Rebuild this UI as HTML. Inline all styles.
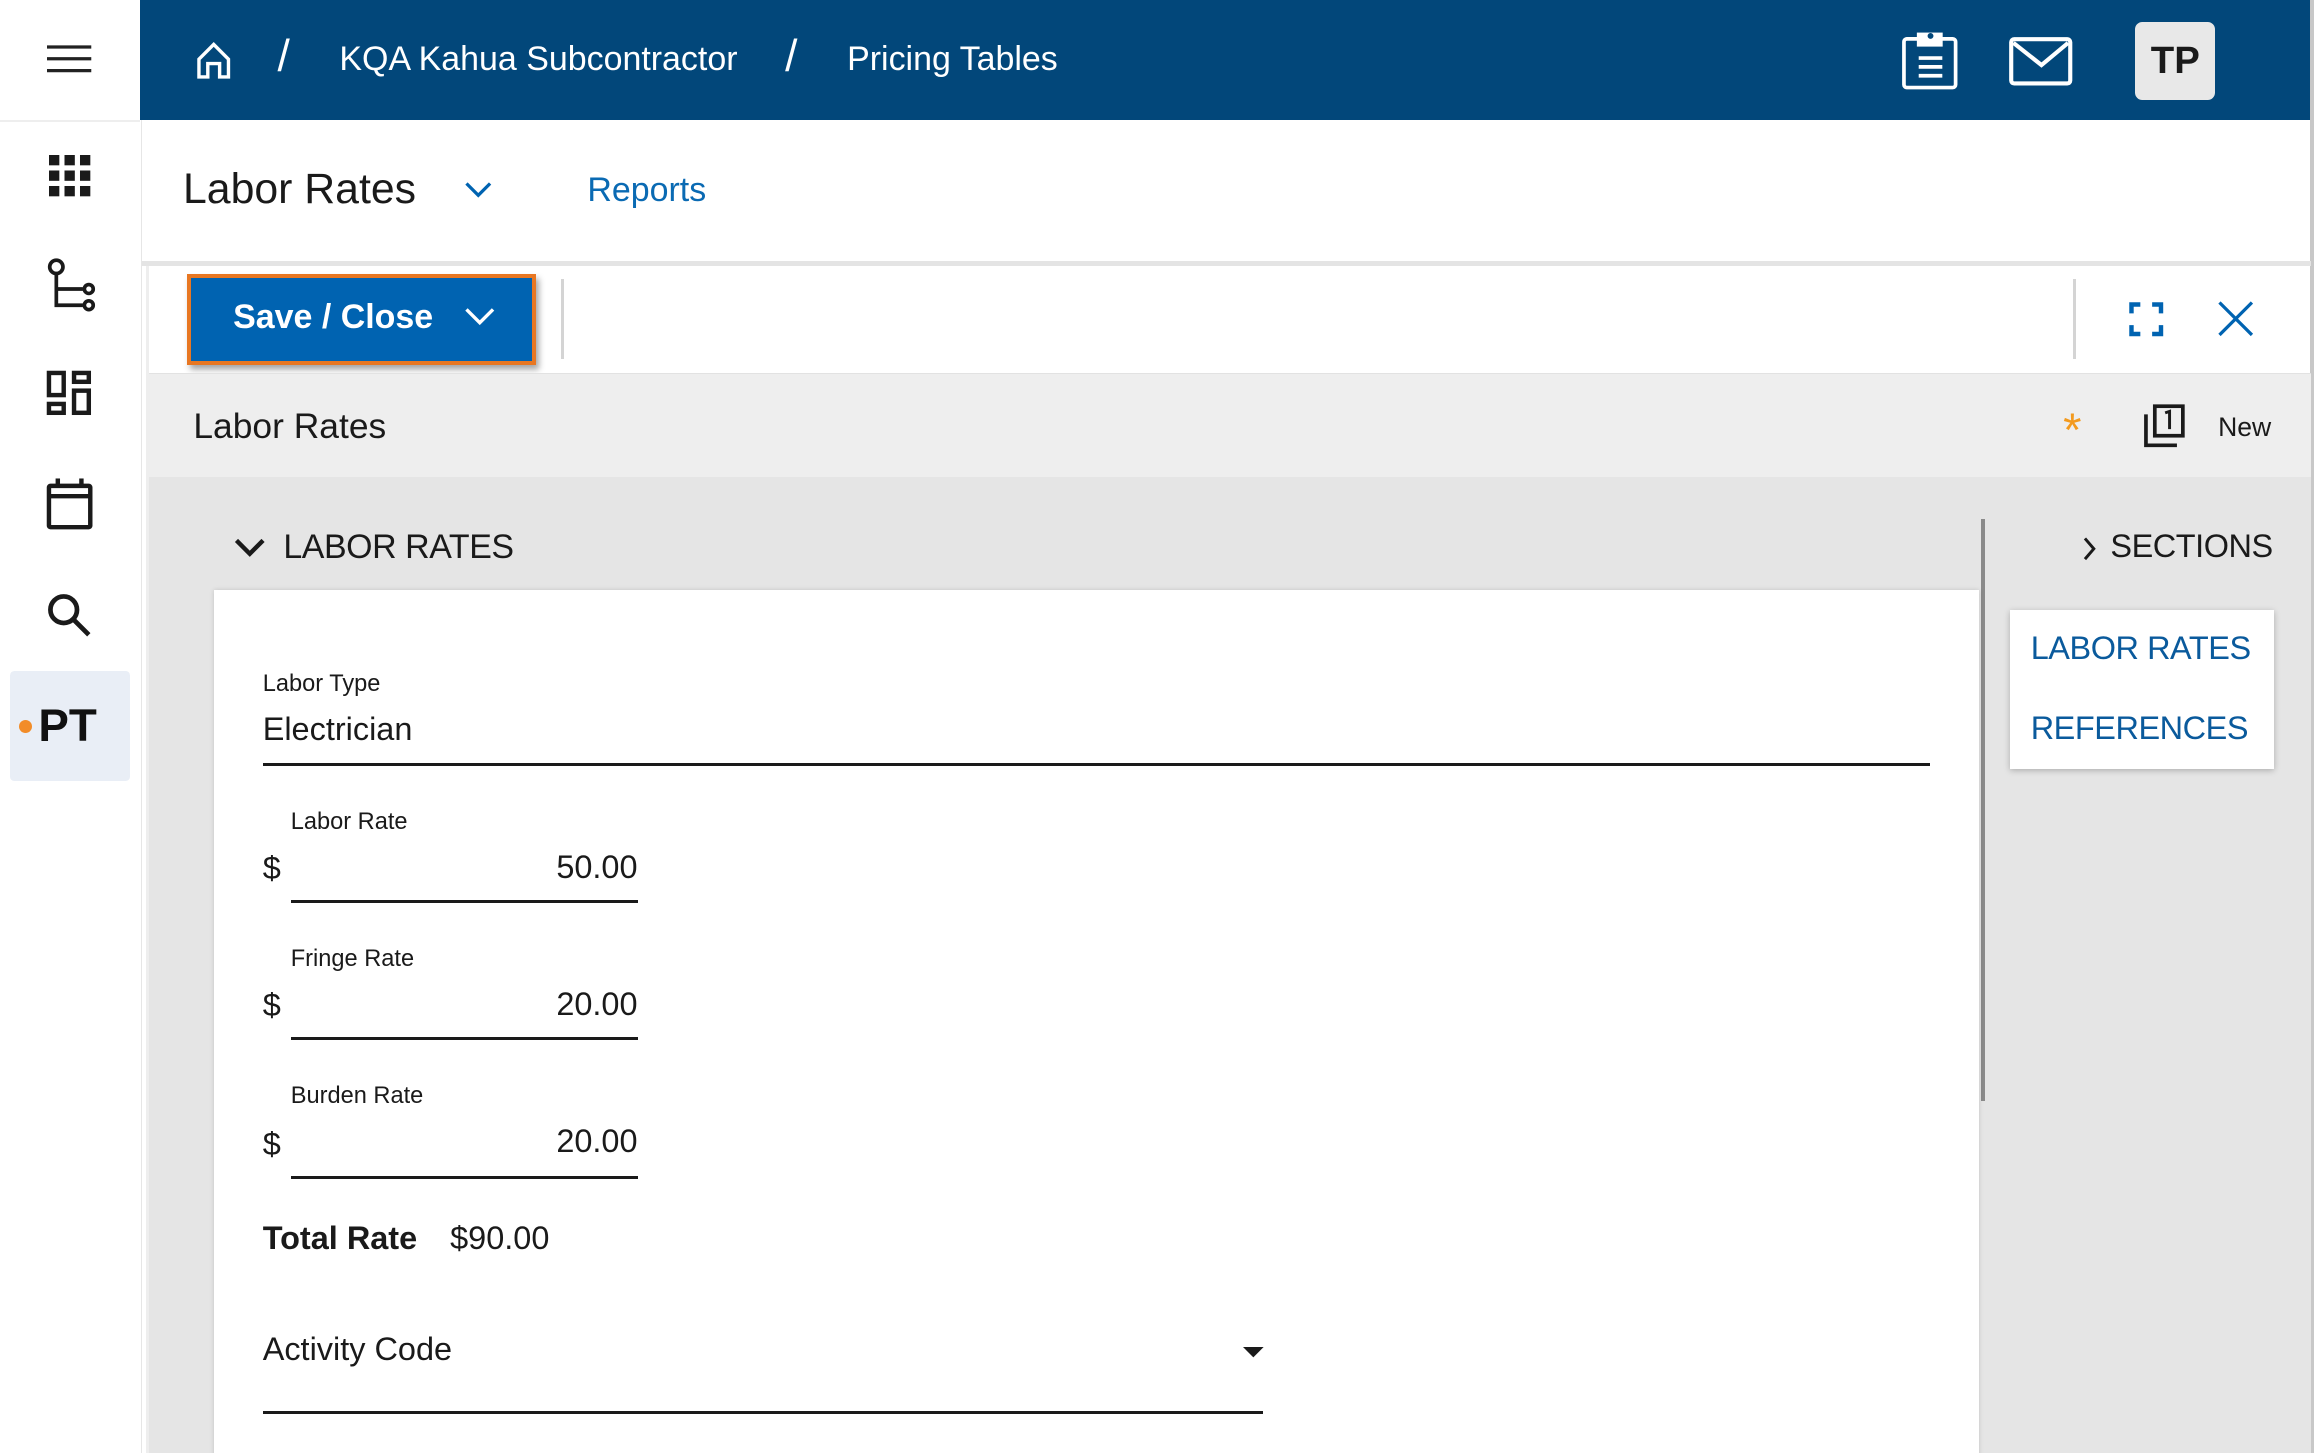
<!DOCTYPE html>
<html><head><meta charset="utf-8"><style>
*{box-sizing:border-box;margin:0;padding:0}
html,body{width:2314px;height:1453px;overflow:hidden;background:#fff}
#r{zoom:1.4758;position:relative;width:1568px;height:985px;font-family:"Liberation Sans",Arial,sans-serif;color:#1a1a1a;overflow:hidden}
.a{position:absolute}
svg{position:absolute;overflow:visible}
</style></head><body><div id="r">
<!-- sidebar -->
<div class="a" style="left:0;top:0;width:96px;height:985px;background:#fff;border-right:1px solid #e6e6e6"></div>
<div class="a" style="left:0;top:81px;width:95px;height:2px;background:#eee"></div>
<svg style="left:32px;top:30px" width="32" height="22"><g stroke="#222" stroke-width="2.2"><line x1="0" y1="2" x2="30" y2="2"/><line x1="0" y1="10" x2="30" y2="10"/><line x1="0" y1="18" x2="30" y2="18"/></g></svg>
<svg style="left:33px;top:105px" width="28" height="28"><g fill="#1a1a1a"><rect x="0" y="0" width="7" height="7"/><rect x="10.5" y="0" width="7" height="7"/><rect x="21" y="0" width="7" height="7"/><rect x="0" y="10.5" width="7" height="7"/><rect x="10.5" y="10.5" width="7" height="7"/><rect x="21" y="10.5" width="7" height="7"/><rect x="0" y="21" width="7" height="7"/><rect x="10.5" y="21" width="7" height="7"/><rect x="21" y="21" width="7" height="7"/></g></svg>
<svg style="left:31px;top:175px" width="34" height="40" fill="none" stroke="#1a1a1a" stroke-width="2.5"><circle cx="7" cy="6" r="4.5"/><path d="M7 11 V32 H25 M7 21 H25"/><circle cx="29" cy="21" r="3"/><circle cx="29" cy="32" r="3"/></svg>
<svg style="left:31px;top:251px" width="32" height="32" fill="none" stroke="#1a1a1a" stroke-width="3"><rect x="2" y="2" width="10" height="15"/><rect x="19" y="2" width="10" height="6"/><rect x="2" y="23" width="10" height="6"/><rect x="19" y="14" width="10" height="15"/></svg>
<svg style="left:31px;top:323px" width="32" height="36" fill="none" stroke="#1a1a1a" stroke-width="3"><rect x="2" y="6" width="28" height="28" rx="1"/><line x1="2" y1="13" x2="30" y2="13"/><line x1="8" y1="1" x2="8" y2="7"/><line x1="24" y1="1" x2="24" y2="7"/></svg>
<svg style="left:31px;top:401px" width="32" height="32" fill="none" stroke="#1a1a1a" stroke-width="3.2"><circle cx="12" cy="12" r="9"/><line x1="19" y1="19" x2="29" y2="29"/></svg>
<div class="a" style="left:7px;top:455px;width:81px;height:74px;background:#e9eef6;border-radius:3px"></div>
<div class="a" style="left:13px;top:488px;width:9px;height:9px;border-radius:50%;background:#f28c28"></div>
<div class="a" style="left:26px;top:474px;font-size:31px;font-weight:bold;color:#111">PT</div>
<!-- top bar -->
<div class="a" style="left:95px;top:0;width:1473px;height:81px;background:#02477a"></div>
<svg style="left:133px;top:27px" width="26" height="28" fill="none" stroke="#fff" stroke-width="2.3"><path d="M2 13 L12 3 L22 13 V25 H16 V16 H8 V25 H2 Z"/></svg>
<div class="a" style="left:188px;top:22px;font-size:30px;color:#fff">/</div>
<div class="a" style="left:230px;top:27px;font-size:23px;color:#fff">KQA Kahua Subcontractor</div>
<div class="a" style="left:532px;top:22px;font-size:30px;color:#fff">/</div>
<div class="a" style="left:574px;top:27px;font-size:23px;color:#fff">Pricing Tables</div>
<svg style="left:1288px;top:20px" width="40" height="42" fill="none" stroke="#fff" stroke-width="2.5"><rect x="2" y="6" width="35" height="33" rx="2"/><rect x="12" y="3" width="15" height="7" fill="#fff"/><circle cx="20" cy="4" r="2" fill="#02477a" stroke="none"/><line x1="12" y1="19" x2="28" y2="19"/><line x1="12" y1="25" x2="28" y2="25"/><line x1="12" y1="31" x2="28" y2="31"/></svg>
<svg style="left:1361px;top:25px" width="44" height="35" fill="none" stroke="#fff" stroke-width="2.8"><rect x="1.5" y="1.5" width="40" height="30" rx="2"/><path d="M3 4 L22 19 L40 4"/></svg>
<div class="a" style="left:1447px;top:15px;width:54px;height:53px;background:#e8e8e8;border-radius:5px;font-size:26px;font-weight:bold;text-align:center;line-height:53px;color:#1a1a1a">TP</div>
<div class="a" style="left:1565px;top:0;width:3px;height:985px;background:#c8c8c8"></div>
<!-- header row -->
<div class="a" style="left:124px;top:112px;font-size:29px;color:#1a1a1a">Labor Rates</div>
<svg style="left:315px;top:123px" width="18" height="12" fill="none" stroke="#0063b1" stroke-width="2.2"><path d="M1 1 L9 9 L17 1"/></svg>
<div class="a" style="left:398px;top:116px;font-size:23px;color:#0a6ab3">Reports</div>
<div class="a" style="left:96px;top:177px;width:1470px;height:3px;background:#e4e4e4"></div>
<div class="a" style="left:99px;top:180px;width:2px;height:805px;background:#eee"></div>
<!-- toolbar -->
<div class="a" style="left:127px;top:186px;width:236px;height:61px;border:3px solid #e87722;background:#0063b1;box-shadow:2px 3px 4px rgba(0,0,0,.35)"></div>
<div class="a" style="left:158px;top:202px;font-size:23px;font-weight:bold;color:#fff">Save / Close</div>
<svg style="left:315px;top:209px" width="20" height="13" fill="none" stroke="#fff" stroke-width="2.3"><path d="M1 1 L10 10 L19 1"/></svg>
<div class="a" style="left:380px;top:189px;width:2px;height:54px;background:#d4d4d4"></div>
<div class="a" style="left:1405px;top:189px;width:2px;height:54px;background:#d4d4d4"></div>
<svg style="left:1443px;top:205px" width="22" height="22" fill="none" stroke="#0063b1" stroke-width="3"><path d="M1 7 V1 H7 M15 1 H21 V7 M21 15 V21 H15 M7 21 H1 V15"/></svg>
<svg style="left:1503px;top:204px" width="24" height="24" fill="none" stroke="#0063b1" stroke-width="2.2"><path d="M1 1 L23 23 M23 1 L1 23"/></svg>
<!-- title bar -->
<div class="a" style="left:101px;top:253px;width:1465px;height:70px;background:#eeeeee;border-top:1px solid #e2e2e2"></div>
<div class="a" style="left:131px;top:275px;font-size:24px;color:#1a1a1a">Labor Rates</div>
<div class="a" style="left:1398px;top:276px;font-size:32px;color:#f39a1e;line-height:32px">*</div>
<svg style="left:1452px;top:274px" width="30" height="30" fill="none" stroke="#1a1a1a" stroke-width="2.5"><path d="M2 7 V28 H23"/><rect x="8" y="1.5" width="19" height="20"/><path d="M15 6 L18 5 V17" stroke-width="2"/></svg>
<div class="a" style="left:1503px;top:279px;font-size:18px;color:#1a1a1a">New</div>
<!-- content -->
<div class="a" style="left:101px;top:323px;width:1465px;height:662px;background:#e5e5e5"></div>
<svg style="left:159px;top:365px" width="20" height="14" fill="none" stroke="#1a1a1a" stroke-width="3"><path d="M1 1 L10 10 L19 1"/></svg>
<div class="a" style="left:192px;top:358px;font-size:23px;color:#1a1a1a;letter-spacing:-0.3px">LABOR RATES</div>
<div class="a" style="left:1342px;top:352px;width:3px;height:394px;background:#8a8a8a"></div>
<svg style="left:1411px;top:364px" width="10" height="16" fill="none" stroke="#1a1a1a" stroke-width="2"><path d="M2 1 L8 8 L2 15"/></svg>
<div class="a" style="left:1430px;top:358px;font-size:22px;color:#1a1a1a;letter-spacing:-0.3px">SECTIONS</div>
<div class="a" style="left:1362px;top:413px;width:179px;height:108px;background:#fff;box-shadow:0 1px 4px rgba(0,0,0,.25)"></div>
<div class="a" style="left:1376px;top:427px;font-size:22px;color:#0a5a9c;letter-spacing:-0.3px">LABOR RATES</div>
<div class="a" style="left:1376px;top:481px;font-size:22px;color:#0a5a9c;letter-spacing:-0.3px">REFERENCES</div>
<!-- card -->
<div class="a" style="left:145px;top:400px;width:1196px;height:600px;background:#fff;box-shadow:0 0 3px rgba(0,0,0,.15)"></div>
<div class="a" style="left:178px;top:455px;font-size:16px">Labor Type</div>
<div class="a" style="left:178px;top:482px;font-size:22px">Electrician</div>
<div class="a" style="left:178px;top:517px;width:1130px;height:2px;background:#1a1a1a"></div>

<div class="a" style="left:197px;top:548px;font-size:16px">Labor Rate</div>
<div class="a" style="left:178px;top:576px;font-size:22px">$</div>
<div class="a" style="left:197px;top:575px;width:235px;text-align:right;font-size:22px">50.00</div>
<div class="a" style="left:197px;top:610px;width:235px;height:2px;background:#1a1a1a"></div>

<div class="a" style="left:197px;top:641px;font-size:16px">Fringe Rate</div>
<div class="a" style="left:178px;top:669px;font-size:22px">$</div>
<div class="a" style="left:197px;top:668px;width:235px;text-align:right;font-size:22px">20.00</div>
<div class="a" style="left:197px;top:703px;width:235px;height:2px;background:#1a1a1a"></div>

<div class="a" style="left:197px;top:734px;font-size:16px">Burden Rate</div>
<div class="a" style="left:178px;top:763px;font-size:22px">$</div>
<div class="a" style="left:197px;top:761px;width:235px;text-align:right;font-size:22px">20.00</div>
<div class="a" style="left:197px;top:797px;width:235px;height:2px;background:#1a1a1a"></div>

<div class="a" style="left:178px;top:827px;font-size:22px;font-weight:bold">Total Rate</div>
<div class="a" style="left:305px;top:827px;font-size:22px">$90.00</div>

<div class="a" style="left:178px;top:902px;font-size:22px">Activity Code</div>
<svg style="left:842px;top:913px" width="14" height="8"><path d="M0 0 L14 0 L7 7 Z" fill="#1a1a1a"/></svg>
<div class="a" style="left:178px;top:956px;width:678px;height:2px;background:#1a1a1a"></div>
</div></body></html>
